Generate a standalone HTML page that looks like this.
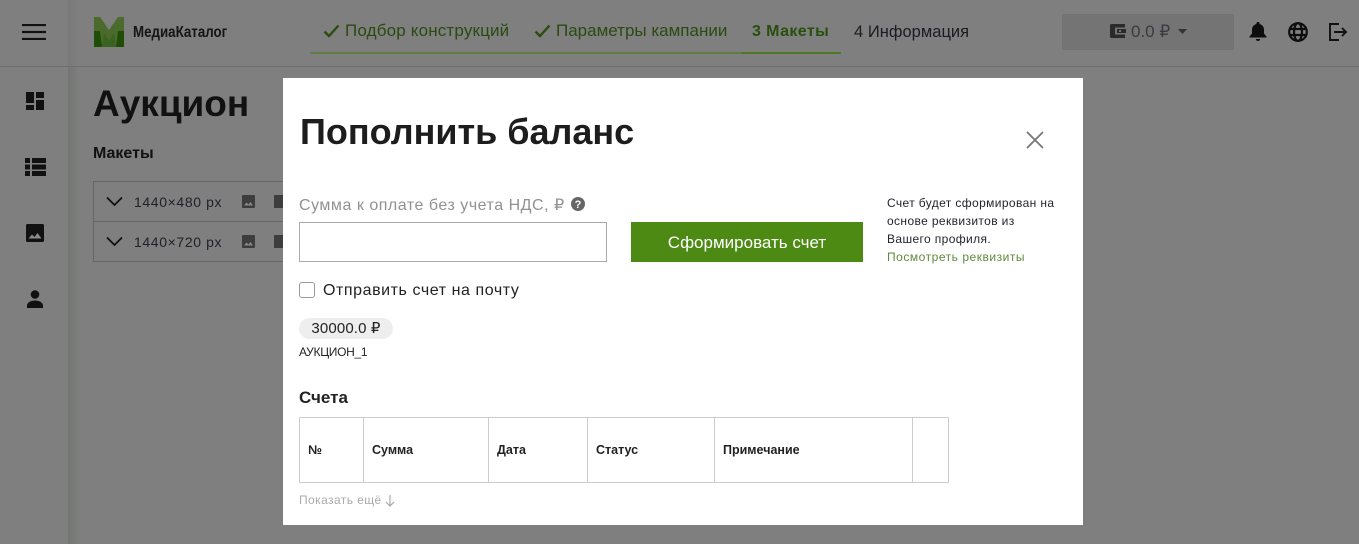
<!DOCTYPE html>
<html lang="ru"><head><meta charset="utf-8"><style>
html,body{margin:0;padding:0;width:1359px;height:544px;overflow:hidden;background:#7f7f7f}
body{font-family:"Liberation Sans","DejaVu Sans",sans-serif;color:#111;position:relative}
.a{position:absolute;white-space:nowrap;line-height:1}
svg{position:absolute;display:block}
.g{color:#2a4a10}
th{font-size:12.500px;font-weight:700;text-align:left;padding:0 0 0 8px;border:1px solid #ccc;color:#222;height:64px}
</style></head><body>
<div class="a" style="left:68px;top:67px;width:12px;height:477px;background:linear-gradient(90deg,#737673,#7f7f7f)"></div>
<div class="a" style="left:0;top:66px;width:1359px;height:1px;background:#6f6f6f"></div>
<div class="a" style="left:68px;top:0;width:10px;height:66px;background:linear-gradient(90deg,#797979,#7f7f7f)"></div>

<svg style="left:22px;top:24px" width="25" height="16"><path d="M0 1h24M0 8h24M0 15h24" stroke="#111" stroke-width="2.200"/></svg>
<svg style="left:94px;top:17px" width="30" height="30" viewBox="0 0 30 30"><rect width="30" height="30" fill="#4a6b2b"/><path d="M6 0h18L15 13z" fill="#7f7f7f"/><path d="M0 14h6l2 16H0zM30 14h-6l-2 16h8z" fill="#1f4d05"/><path d="M8 30l2-14 5 8 5-8 2 14z" fill="#3a6220"/></svg>
<div class="a" style="left:133px;top:25px;font-size:15.500px;font-weight:700;color:#151515;transform:scaleX(.86);transform-origin:0 0">МедиаКаталог</div>

<svg style="left:323px;top:24px" width="18" height="14"><path d="M1.500 7.500l4.500 4.500L15.500 1.500" fill="none" stroke="#2a4e0e" stroke-width="2.400"/></svg>
<div class="a g" style="left:345px;top:22px;font-size:17px;letter-spacing:.17px">Подбор конструкций</div>
<svg style="left:534px;top:24px" width="18" height="14"><path d="M1.500 7.500l4.500 4.500L15.500 1.500" fill="none" stroke="#2a4e0e" stroke-width="2.400"/></svg>
<div class="a g" style="left:556px;top:22px;font-size:17px;letter-spacing:0">Параметры кампании</div>
<div class="a" style="left:752px;top:24px;font-size:16px;font-weight:700;letter-spacing:.4px;color:#2a4e0e">3 Макеты</div>
<div class="a" style="left:854px;top:24px;font-size:16.500px;letter-spacing:.03px;color:#1b1b22">4 Информация</div>
<div class="a" style="left:310px;top:52px;width:431px;height:2px;background:#5f7d45"></div>
<div class="a" style="left:741px;top:52px;width:100px;height:2px;background:#4c7a22"></div>

<div class="a" style="left:1062px;top:14px;width:172px;height:36px;background:#747474"></div>
<svg style="left:1110px;top:24px" width="16" height="15"><path d="M0 1.500A1.500 1.500 0 0 1 1.500 0H15v14H1.500A1.500 1.500 0 0 1 0 12.500z" fill="#2a2a2a"/><rect x="5" y="3.500" width="11" height="7" fill="#747474"/><rect x="7" y="5" width="9" height="4" fill="#2a2a2a"/><rect x="9" y="6" width="2" height="2" fill="#747474"/></svg>
<div class="a" style="left:1131px;top:23px;font-size:17px;color:#3a3a40">0.0 ₽</div>
<svg style="left:1178px;top:29px" width="9" height="6"><path d="M0 0h9L4.500 5z" fill="#333"/></svg>
<svg style="left:1249px;top:22px" width="18" height="20" viewBox="0 0 18 20"><path d="M9 0a1.500 1.500 0 0 1 1.500 2C13.500 2.800 15 5 15 8v3.500l2.500 3v1H.5v-1l2.500-3V8c0-3 1.500-5.200 4.500-6A1.500 1.500 0 0 1 9 0z" fill="#0d0d0d"/><path d="M7 17h4a2 2 0 0 1-4 0z" fill="#0d0d0d"/></svg>
<svg style="left:1288px;top:22px" width="20" height="20" viewBox="0 0 20 20"><circle cx="10" cy="10" r="8.800" fill="none" stroke="#0d0d0d" stroke-width="2.200"/><ellipse cx="10" cy="10" rx="4" ry="8.800" fill="none" stroke="#0d0d0d" stroke-width="2.200"/><path d="M1 7h18M1 13h18" stroke="#0d0d0d" stroke-width="2.200"/></svg>
<svg style="left:1329px;top:23px" width="19" height="18" viewBox="0 0 19 18"><path d="M10 1H1v16h9" fill="none" stroke="#111" stroke-width="1.900"/><path d="M5 9h12M13 5l4 4-4 4" fill="none" stroke="#111" stroke-width="1.900"/></svg>

<svg style="left:26px;top:92px" width="19" height="18"><path d="M0 0h8v11H0zM10 0h8v6h-8zM0 13h8v5H0zM10 8h8v10h-8z" fill="#111"/></svg>
<svg style="left:25px;top:158px" width="21" height="18"><path d="M0 0h5v5H0zM7 0h14v5H7zM0 6.500h5v5H0zM7 6.500h14v5H7zM0 13h5v5H0zM7 13h14v5H7z" fill="#111"/></svg>
<svg style="left:26px;top:224px" width="18" height="18"><rect width="18" height="18" rx="1.500" fill="#111"/><path d="M2.500 14.500l3.500-4 2.500 2.500 3-4 4 5.500z" fill="#8a8a8a"/></svg>
<svg style="left:26px;top:290px" width="18" height="18"><circle cx="9" cy="4.500" r="4.300" fill="#111"/><path d="M1 18v-2.500C1 12.500 5 10.500 9 10.500s8 2 8 5V18z" fill="#111"/></svg>

<div class="a" style="left:93px;top:85px;font-size:37px;font-weight:700;color:#111">Аукцион</div>
<div class="a" style="left:93px;top:146px;font-size:16px;font-weight:700;color:#111">Макеты</div>
<div class="a" style="left:93px;top:181px;width:200px;height:79px;border:1px solid #666"></div>
<div class="a" style="left:93px;top:221px;width:200px;height:1px;background:#666"></div>
<svg style="left:106px;top:196px" width="17" height="11"><path d="M1 1.500l7.500 7.500L16 1.500" fill="none" stroke="#111" stroke-width="1.800"/></svg>
<svg style="left:106px;top:236px" width="17" height="11"><path d="M1 1.500l7.500 7.500L16 1.500" fill="none" stroke="#111" stroke-width="1.800"/></svg>
<div class="a" style="left:134px;top:195px;font-size:14px;letter-spacing:.62px;color:#1f1f26">1440×480 px</div>
<div class="a" style="left:134px;top:235px;font-size:14px;letter-spacing:.62px;color:#1f1f26">1440×720 px</div>
<svg style="left:242px;top:195px" width="13" height="13"><rect width="13" height="13" rx="1" fill="#3d3d3d"/><path d="M2 10.500l2.500-3 2 2 2-2.500 2.500 3.500z" fill="#8a8a8a"/></svg>
<svg style="left:242px;top:235px" width="13" height="13"><rect width="13" height="13" rx="1" fill="#3d3d3d"/><path d="M2 10.500l2.500-3 2 2 2-2.500 2.500 3.500z" fill="#8a8a8a"/></svg>
<div class="a" style="left:274px;top:195px;width:12px;height:13px;background:#3d3d3d"></div>
<div class="a" style="left:274px;top:235px;width:12px;height:13px;background:#3d3d3d"></div>

<div class="a" style="left:283px;top:78px;width:800px;height:447px;background:#fff"></div>
<div class="a" style="left:300px;top:114px;font-size:36px;font-weight:700;color:#1d1d1d">Пополнить баланс</div>
<svg style="left:1026px;top:131px" width="18" height="18"><path d="M1 1l16 16M17 1L1 17" stroke="#777" stroke-width="1.800"/></svg>

<div class="a" style="left:299px;top:198px;font-size:16px;letter-spacing:.52px;color:#919191">Сумма к оплате без учета НДС, ₽</div>
<svg style="left:571px;top:197px" width="14" height="14"><circle cx="7" cy="7" r="7" fill="#666"/><text x="7" y="11" text-anchor="middle" font-size="11" font-weight="700" fill="#fff" font-family="Liberation Sans">?</text></svg>
<div class="a" style="left:299px;top:222px;width:308px;height:40px;border:1px solid #aaa;box-sizing:border-box"></div>
<div class="a" style="left:631px;top:222px;width:232px;height:40px;background:#4c8a14;color:#fff;font-size:17px;line-height:41px;text-align:center">Сформировать счет</div>
<div class="a" style="left:887px;top:194px;font-size:12px;line-height:18px;letter-spacing:.38px;color:#23232e">Счет будет сформирован на<br>основе реквизитов из<br>Вашего профиля.<br><span style="color:#5f8a3c;letter-spacing:.53px">Посмотреть реквизиты</span></div>

<div class="a" style="left:299px;top:282px;width:16px;height:16px;border:1px solid #999;border-radius:3px;box-sizing:border-box"></div>
<div class="a" style="left:323px;top:283px;font-size:16px;letter-spacing:.57px;color:#222">Отправить счет на почту</div>
<div class="a" style="left:299px;top:318px;width:94px;height:21px;border-radius:11px;background:#eee;color:#222;font-size:15px;letter-spacing:.15px;line-height:21px;text-align:center">30000.0 ₽</div>
<div class="a" style="left:299px;top:346px;font-size:12px;color:#222;letter-spacing:-.3px">АУКЦИОН_1</div>

<div class="a" style="left:299px;top:389px;font-size:17px;font-weight:700;color:#222">Счета</div>
<table style="position:absolute;left:299px;top:417px;width:650px;height:66px;border-collapse:collapse;table-layout:fixed">
<tr><th style="width:55px">№</th><th style="width:116px">Сумма</th><th style="width:90px">Дата</th><th style="width:118px">Статус</th><th style="width:189px">Примечание</th><th></th></tr>
</table>
<div class="a" style="left:299px;top:494px;font-size:12px;color:#aaa;letter-spacing:.42px">Показать ещё</div>
<svg style="left:385px;top:495px" width="10" height="12"><path d="M5 0v10.500M1 7l4 4 4-4" fill="none" stroke="#aaa" stroke-width="1.200"/></svg>
</body></html>
